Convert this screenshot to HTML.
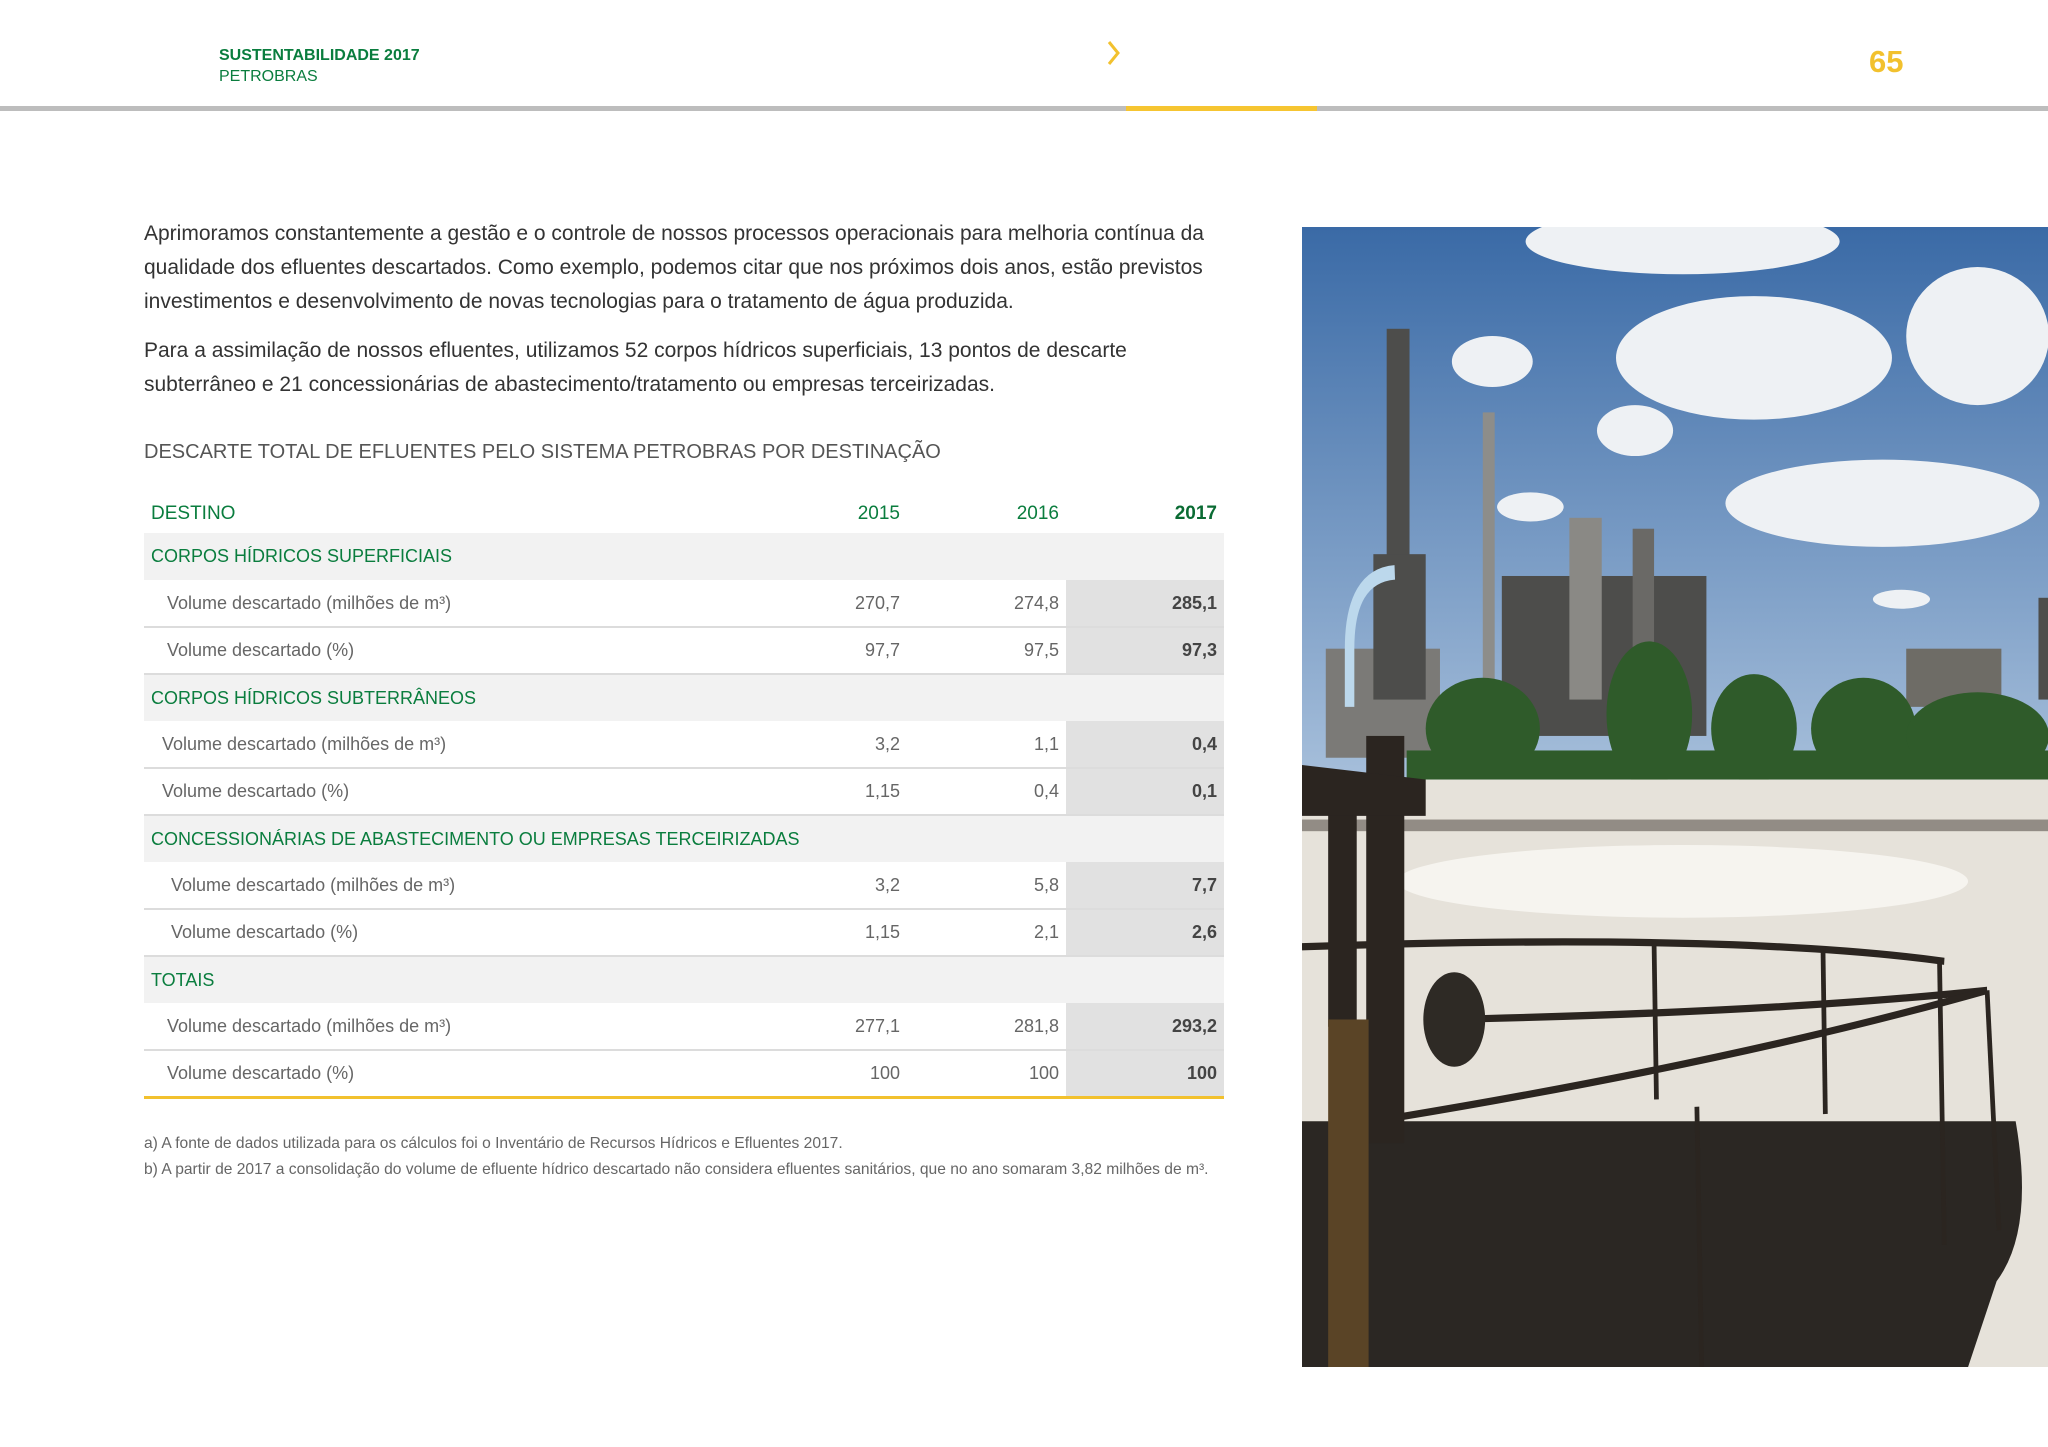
<!DOCTYPE html>
<html><head><meta charset="utf-8"><style>
*{margin:0;padding:0;box-sizing:border-box}
body{width:2048px;height:1447px;background:#fff;position:relative;overflow:hidden;font-family:"Liberation Sans",sans-serif;}
.a{position:absolute;white-space:nowrap}
.g{color:#0a7d3e}
p.t{position:absolute;left:144px;font-size:21px;line-height:34px;color:#333;white-space:nowrap}
table{position:absolute;left:144px;top:495px;width:1080px;border-collapse:collapse;font-size:18px;table-layout:fixed}
td{height:47px;padding:0 7px}
tr.h td{color:#0a7d3e;font-size:19px;height:38px}
tr.s td{background:#f2f2f2;color:#0a7d3e;font-size:18px}
tr.d td{color:#666;border-bottom:2px solid #dcdcdc}
tr.d td.n{text-align:right}
tr.d td.b{background:#e1e1e1;font-weight:bold;color:#444;text-align:right}
tr.last td{border-bottom:3px solid #f2c12e}
</style></head><body>
<div class="a g" style="left:219px;top:47px;font-size:16px;font-weight:bold">SUSTENTABILIDADE 2017</div>
<div class="a g" style="left:219px;top:68px;font-size:16px">PETROBRAS</div>
<svg class="a" style="left:1106px;top:40px" width="16" height="26"><path d="M3 2 L12 13 L3 24" stroke="#f2c12e" stroke-width="3" fill="none"/></svg>
<div class="a" style="left:1869px;top:44px;font-size:31px;font-weight:bold;color:#f2c12e">65</div>
<div class="a" style="left:0;top:106px;width:2048px;height:5px;background:#bdbdbd"></div>
<div class="a" style="left:1126px;top:106px;width:191px;height:5px;background:#f6c531"></div>

<p class="t" style="top:217px">Aprimoramos constantemente a gestão e o controle de nossos processos operacionais para melhoria contínua da<br>qualidade dos efluentes descartados. Como exemplo, podemos citar que nos próximos dois anos, estão previstos<br>investimentos e desenvolvimento de novas tecnologias para o tratamento de água produzida.</p>
<p class="t" style="top:334px">Para a assimilação de nossos efluentes, utilizamos 52 corpos hídricos superficiais, 13 pontos de descarte<br>subterrâneo e 21 concessionárias de abastecimento/tratamento ou empresas terceirizadas.</p>
<div class="a" style="left:144px;top:441px;font-size:20px;color:#555">DESCARTE TOTAL DE EFLUENTES PELO SISTEMA PETROBRAS POR DESTINAÇÃO</div>

<table>
<colgroup><col style="width:610px"><col style="width:153px"><col style="width:159px"><col style="width:158px"></colgroup>
<tr class="h"><td>DESTINO</td><td style="text-align:right">2015</td><td style="text-align:right">2016</td><td style="text-align:right;font-weight:bold;color:#0a6b33">2017</td></tr>
<tr class="s"><td colspan="4">CORPOS HÍDRICOS SUPERFICIAIS</td></tr>
<tr class="d"><td style="padding-left:23px">Volume descartado (milhões de m³)</td><td class="n">270,7</td><td class="n">274,8</td><td class="b">285,1</td></tr>
<tr class="d"><td style="padding-left:23px">Volume descartado (%)</td><td class="n">97,7</td><td class="n">97,5</td><td class="b">97,3</td></tr>
<tr class="s"><td colspan="4">CORPOS HÍDRICOS SUBTERRÂNEOS</td></tr>
<tr class="d"><td style="padding-left:18px">Volume descartado (milhões de m³)</td><td class="n">3,2</td><td class="n">1,1</td><td class="b">0,4</td></tr>
<tr class="d"><td style="padding-left:18px">Volume descartado (%)</td><td class="n">1,15</td><td class="n">0,4</td><td class="b">0,1</td></tr>
<tr class="s"><td colspan="4">CONCESSIONÁRIAS DE ABASTECIMENTO OU EMPRESAS TERCEIRIZADAS</td></tr>
<tr class="d"><td style="padding-left:27px">Volume descartado (milhões de m³)</td><td class="n">3,2</td><td class="n">5,8</td><td class="b">7,7</td></tr>
<tr class="d"><td style="padding-left:27px">Volume descartado (%)</td><td class="n">1,15</td><td class="n">2,1</td><td class="b">2,6</td></tr>
<tr class="s"><td colspan="4">TOTAIS</td></tr>
<tr class="d"><td style="padding-left:23px">Volume descartado (milhões de m³)</td><td class="n">277,1</td><td class="n">281,8</td><td class="b">293,2</td></tr>
<tr class="d last"><td style="padding-left:23px">Volume descartado (%)</td><td class="n">100</td><td class="n">100</td><td class="b">100</td></tr>
</table>
<div class="a" style="left:144px;top:1135px;font-size:15.6px;color:#666">a) A fonte de dados utilizada para os cálculos foi o Inventário de Recursos Hídricos e Efluentes 2017.</div>
<div class="a" style="left:144px;top:1161px;font-size:15.6px;color:#666">b) A partir de 2017 a consolidação do volume de efluente hídrico descartado não considera efluentes sanitários, que no ano somaram 3,82 milhões de m³.</div>

<svg class="a" style="left:1302px;top:227px" width="746" height="1140" viewBox="0 0 1568 1568" preserveAspectRatio="none">
<defs><linearGradient id="sk" x1="0" y1="0" x2="0" y2="1"><stop offset="0" stop-color="#3a6aa6"/><stop offset="1" stop-color="#a9c1dc"/></linearGradient></defs>
<rect width="1568" height="780" fill="url(#sk)"/>
<g fill="#eef1f4">
<ellipse cx="800" cy="20" rx="330" ry="45"/><ellipse cx="400" cy="185" rx="85" ry="35"/>
<ellipse cx="950" cy="180" rx="290" ry="85"/><ellipse cx="1420" cy="150" rx="150" ry="95"/>
<ellipse cx="700" cy="280" rx="80" ry="35"/><ellipse cx="1220" cy="380" rx="330" ry="60"/>
<ellipse cx="480" cy="385" rx="70" ry="20"/><ellipse cx="1260" cy="512" rx="60" ry="13"/>
</g>
<g fill="#4d4d4b">
<rect x="178" y="140" width="48" height="330"/><rect x="380" y="255" width="25" height="380" fill="#8d8d8a"/>
<rect x="50" y="580" width="240" height="150" fill="#7b7a77"/>
<rect x="150" y="450" width="110" height="200"/>
<rect x="420" y="480" width="430" height="220"/>
<rect x="562" y="400" width="68" height="250" fill="#8a8985"/>
<rect x="695" y="415" width="45" height="200" fill="#6a6966"/>
<rect x="1270" y="580" width="200" height="80" fill="#6e6c66"/>
<rect x="1548" y="510" width="20" height="140"/>
</g>
<path d="M100 660 L100 580 Q100 480 195 475" stroke="#bcd8ec" stroke-width="20" fill="none"/>
<g fill="#2f5b2a">
<ellipse cx="380" cy="690" rx="120" ry="70"/><ellipse cx="730" cy="670" rx="90" ry="100"/>
<ellipse cx="950" cy="690" rx="90" ry="75"/><ellipse cx="1180" cy="690" rx="110" ry="70"/>
<ellipse cx="1420" cy="700" rx="150" ry="60"/><rect x="220" y="720" width="1348" height="40"/>
</g>
<rect y="760" width="1568" height="808" fill="#e6e2da"/>
<rect y="815" width="1568" height="16" fill="#5a544c" opacity=".6"/>
<ellipse cx="800" cy="900" rx="600" ry="50" fill="#f6f4ef"/>
<path d="M0 1230 L1500 1230 Q1540 1380 1460 1450 L1400 1568 L0 1568 Z" fill="#2b2723"/>
<g stroke="#2b2520" stroke-width="10" fill="none">
<path d="M0 990 Q900 970 1350 1010"/><path d="M300 1090 Q1000 1080 1440 1050"/>
<path d="M150 1230 Q900 1150 1440 1050"/>
<path d="M740 985 L745 1200"/><path d="M1095 990 L1100 1220"/><path d="M1340 1010 L1350 1400"/><path d="M1440 1050 L1465 1380"/><path d="M830 1210 L840 1568"/>
</g>
<rect x="55" y="800" width="60" height="300" fill="#2b2520"/><rect x="135" y="700" width="80" height="560" fill="#2b2520"/>
<path d="M0 740 L260 760 L260 810 L0 810Z" fill="#2b2520"/>
<circle cx="320" cy="1090" r="65" fill="#2e2a25"/>
<rect x="55" y="1090" width="85" height="478" fill="#5a4426"/>
</svg>
</body></html>
